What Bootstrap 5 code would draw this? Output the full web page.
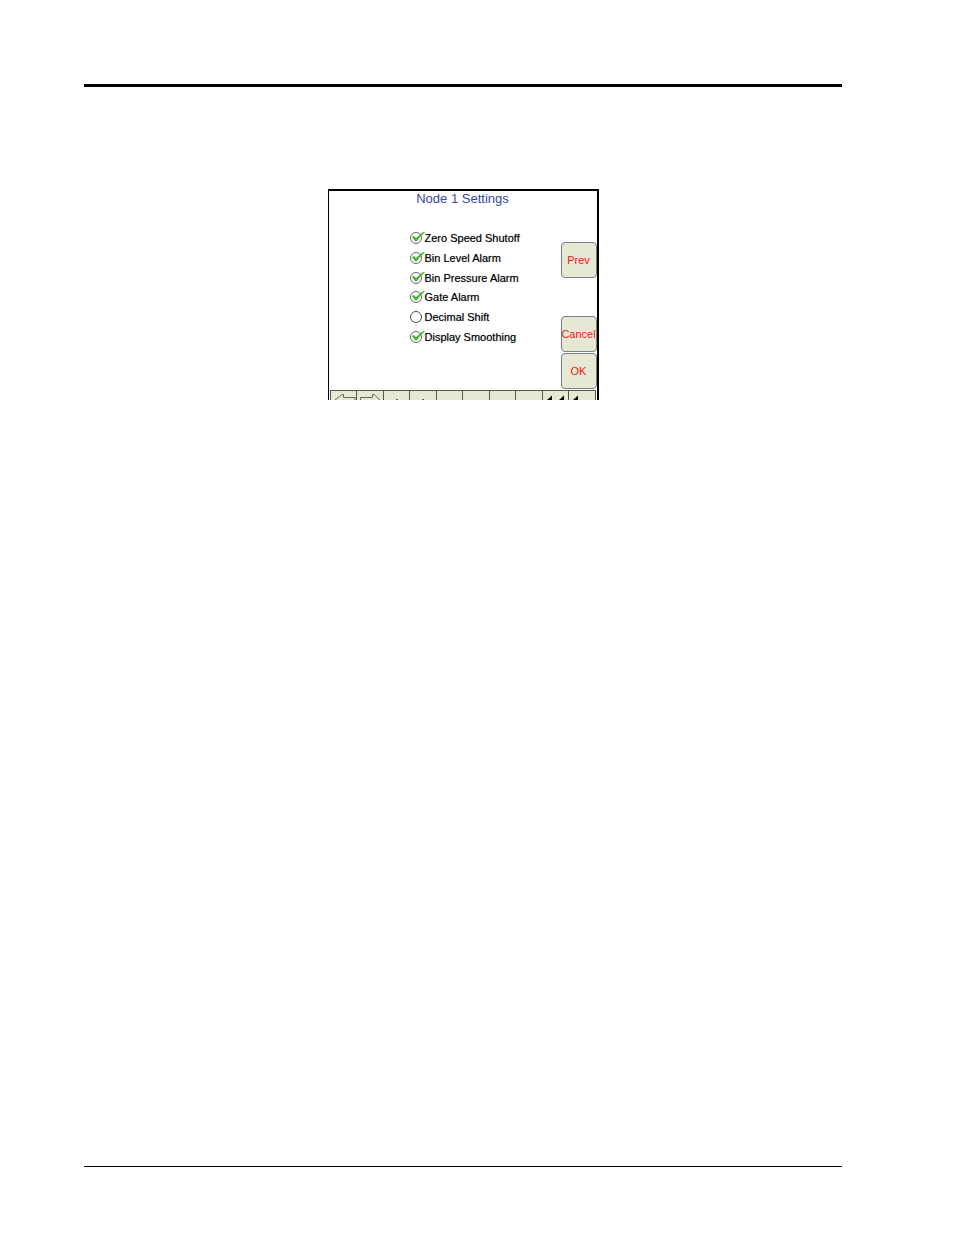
<!DOCTYPE html>
<html lang="en">
<head>
<meta charset="utf-8">
<meta name="viewport" content="width=device-width, initial-scale=1">
<title>Node 1 Settings</title>
<link href="https://cdn.jsdelivr.net/npm/bootstrap@5.3.0/dist/css/bootstrap.min.css" rel="stylesheet">
<style>
  body { font-family: "Liberation Sans", Arial, sans-serif; background: #fff; color: #000; }
  .sheet { padding: 84px 112px 68px 84px; }
  .rule-top { border-top: 3px solid #000; opacity: 1; }
  .rule-bottom { border-top: 1px solid #000; opacity: 1; }
  .screen { width: 271px; margin-top: 102px; border: 2px solid #000; border-left-width: 1px; border-bottom: 0; }
  .screen-title { font-size: 13px; line-height: 16px; color: #3348a8; }
  .screen-body { height: 183px; padding-left: 81px; }
  .options { height: 118px; margin-top: 22px; }
  .option { font-size: 11px; line-height: 19px; text-shadow: 0 0 1px #00000070; }
  .option input {
    appearance: none; width: 15px; height: 15px; margin: 0;
    background: url("data:image/svg+xml,%3Csvg xmlns='http://www.w3.org/2000/svg' viewBox='0 0 15 15'%3E%3Ccircle cx='6' cy='7' r='5.5' fill='%23fff' stroke='%23333' stroke-width='.9'/%3E%3C/svg%3E") no-repeat;
  }
  .option input:checked {
    background-image: url("data:image/svg+xml,%3Csvg xmlns='http://www.w3.org/2000/svg' viewBox='0 0 15 15'%3E%3Ccircle cx='6' cy='7' r='5.5' fill='%23fff' stroke='%23444' stroke-width='.8'/%3E%3Cpath d='M1.800 6L4 5L6 7.200Q9.500 3 14 .8L14.800 1.500Q10 5.500 6.600 10.500H5.200Q4 8 1.800 6Z' fill='%233fb52c'/%3E%3C/svg%3E");
  }
  .side-keys { width: 36px; gap: 1px; padding-bottom: 1px; }
  .side-key {
    width: 36px; height: 36px; font-size: 11px; line-height: 16px; color: #f01820;
    background: #e6e8d3; border: 1px solid #74808a; border-radius: 4px;
  }
  .side-key:first-child { margin-bottom: 37px; }
  .softkeys { height: 10px; margin: 0 1px; border: 1px solid #55564c; border-bottom: 0; background: #e6e8d3; }
  .softkey { flex: 1 1 0; min-width: 0; height: 9px; background: none; border: 0; }
  .softkey + .softkey { border-left: 1px solid #55564c; }
  .softkey svg { width: 25px; height: 9px; }
</style>
</head>
<body>
<div class="sheet d-flex flex-column min-vh-100">
  <hr class="rule-top m-0">
  <main class="screen mx-auto">
    <h1 class="screen-title text-center fw-normal m-0">Node 1 Settings</h1>
    <form class="screen-body d-flex justify-content-between">
      <div class="options d-flex flex-column justify-content-between">
        <label class="option d-flex align-items-center"><input type="checkbox" checked>Zero Speed Shutoff</label>
        <label class="option d-flex align-items-center"><input type="checkbox" checked>Bin Level Alarm</label>
        <label class="option d-flex align-items-center"><input type="checkbox" checked>Bin Pressure Alarm</label>
        <label class="option d-flex align-items-center"><input type="checkbox" checked>Gate Alarm</label>
        <label class="option d-flex align-items-center"><input type="checkbox">Decimal Shift</label>
        <label class="option d-flex align-items-center"><input type="checkbox" checked>Display Smoothing</label>
      </div>
      <div class="side-keys d-flex flex-column justify-content-end">
        <button type="button" class="side-key p-0 text-nowrap d-flex align-items-center justify-content-center">Prev</button>
        <button type="button" class="side-key p-0 text-nowrap d-flex align-items-center justify-content-center">Cancel</button>
        <button type="submit" class="side-key p-0 text-nowrap d-flex align-items-center justify-content-center">OK</button>
      </div>
    </form>
    <div class="softkeys d-flex">
      <button class="softkey p-0 d-flex" aria-label="Left"><svg viewBox="0 0 25 9"><path d="M4 9L11 3.500H12.500V6.500H24V9" fill="none" stroke="#66675a"/></svg></button>
      <button class="softkey p-0 d-flex" aria-label="Right"><svg viewBox="0 0 25 9"><path d="M3.500 9V6.500H15.500V3.500H17L23 9" fill="none" stroke="#66675a"/></svg></button>
      <button class="softkey p-0 d-flex" aria-label="Up"><svg viewBox="0 0 25 9"><path d="M12 8.500h2" stroke="#66675a"/></svg></button>
      <button class="softkey p-0 d-flex" aria-label="Down"><svg viewBox="0 0 25 9"><path d="M12 8.500h2" stroke="#66675a"/></svg></button>
      <button class="softkey p-0" aria-label="Key 5"></button>
      <button class="softkey p-0" aria-label="Key 6"></button>
      <button class="softkey p-0" aria-label="Key 7"></button>
      <button class="softkey p-0" aria-label="Key 8"></button>
      <button class="softkey p-0 d-flex" aria-label="First"><svg viewBox="0 0 25 9"><path d="M4 9L9 4.500V9ZM16 9L21 4.500V9Z"/></svg></button>
      <button class="softkey p-0 d-flex" aria-label="Back"><svg viewBox="0 0 25 9"><path d="M4 9L9 4.500V9Z"/></svg></button>
    </div>
  </main>
  <footer class="mt-auto"><hr class="rule-bottom m-0"></footer>
</div>
<script src="https://cdn.jsdelivr.net/npm/bootstrap@5.3.0/dist/js/bootstrap.bundle.min.js"></script>
</body>
</html>
